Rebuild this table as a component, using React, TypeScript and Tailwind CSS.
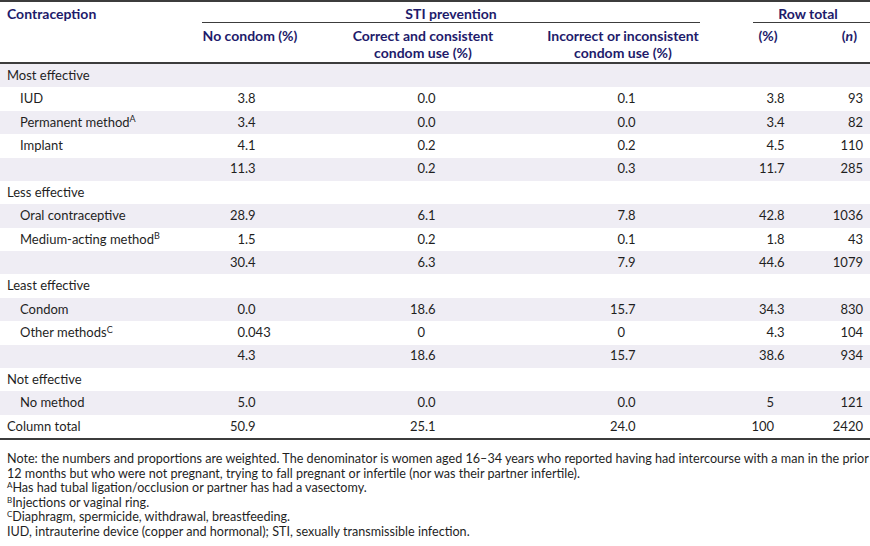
import React from "react";

type Num = string | null;

interface Row {
  label: string;
  sup?: string;
  indent?: boolean;
  values?: [Num, Num, Num, Num, Num];
}

const rows: Row[] = [
  { label: "Most effective" },
  { label: "IUD", indent: true, values: ["3.8", "0.0", "0.1", "3.8", "93"] },
  { label: "Permanent method", sup: "A", indent: true, values: ["3.4", "0.0", "0.0", "3.4", "82"] },
  { label: "Implant", indent: true, values: ["4.1", "0.2", "0.2", "4.5", "110"] },
  { label: "", values: ["11.3", "0.2", "0.3", "11.7", "285"] },
  { label: "Less effective" },
  { label: "Oral contraceptive", indent: true, values: ["28.9", "6.1", "7.8", "42.8", "1036"] },
  { label: "Medium-acting method", sup: "B", indent: true, values: ["1.5", "0.2", "0.1", "1.8", "43"] },
  { label: "", values: ["30.4", "6.3", "7.9", "44.6", "1079"] },
  { label: "Least effective" },
  { label: "Condom", indent: true, values: ["0.0", "18.6", "15.7", "34.3", "830"] },
  { label: "Other methods", sup: "C", indent: true, values: ["0.043", "0", "0", "4.3", "104"] },
  { label: "", values: ["4.3", "18.6", "15.7", "38.6", "934"] },
  { label: "Not effective" },
  { label: "No method", indent: true, values: ["5.0", "0.0", "0.0", "5", "121"] },
  { label: "Column total", values: ["50.9", "25.1", "24.0", "100", "2420"] },
];

// integer part is right-aligned in a box, so the decimal points line up
function Decimal({ value, intWidth }: { value: Num; intWidth: string }) {
  if (!value) return null;
  const [whole, frac] = value.split(".");
  return (
    <div className="flex">
      <span className={`${intWidth} text-right`}>{whole}</span>
      {frac !== undefined && <span>.{frac}</span>}
    </div>
  );
}

const grid = "grid grid-cols-[200px_100px_246px_154px_112px_58px]";

export default function App() {
  return (
    <div
      className="w-[870px] h-[546px] bg-white text-[#1f1f1f] text-[13px]"
      style={{ fontFamily: "Lato, 'Open Sans', sans-serif" }}
    >
      {/* Header */}
      <div className={`${grid} border-t-2 border-b-2 border-[#3c3c3c] font-bold text-[14px] text-[#1e1b6b]`}>
        <div className="row-span-2 pl-[7px] pt-[1px]">Contraception</div>
        <div className="col-span-3 ml-[2px] border-b border-[#3c3c3c] h-[21px] pt-[1px] text-center">
          STI prevention
        </div>
        <div className="col-span-2 ml-[53px] border-b border-[#3c3c3c] h-[21px] pt-[1px] pr-[7px] text-center">
          Row total
        </div>
        <div className="h-[39px] pt-[4px] text-center leading-[17px]">No condom (%)</div>
        <div className="pt-[4px] text-center leading-[17px]">
          Correct and consistent
          <br />
          condom use (%)
        </div>
        <div className="pt-[4px] text-center leading-[17px]">
          Incorrect or inconsistent
          <br />
          condom use (%)
        </div>
        <div className="pt-[4px] pl-[24px] text-center leading-[17px]">(%)</div>
        <div className="pt-[4px] pr-[13px] text-right leading-[17px]">
          (<span className="italic">n</span>)
        </div>
      </div>

      {/* Body */}
      <div className="border-b-2 border-[#3c3c3c]">
        {rows.map((r, i) => (
          <div
            key={i}
            className={`${grid} h-[23.375px] items-center ${i % 2 === 0 ? "bg-[#efedf4]" : "bg-white"}`}
          >
            <div className={r.indent ? "pl-[20px]" : "pl-[7px]"}>
              {r.label}
              {r.sup && <sup className="text-[9px]">{r.sup}</sup>}
            </div>
            {r.values ? (
              <>
                <Decimal value={r.values[0]} intWidth="w-[45px]" />
                <Decimal value={r.values[1]} intWidth="w-[125px]" />
                <Decimal value={r.values[2]} intWidth="w-[79px]" />
                <Decimal value={r.values[3]} intWidth="w-[74px]" />
                <div className="text-right pr-[7px]">{r.values[4]}</div>
              </>
            ) : null}
          </div>
        ))}
      </div>

      {/* Notes */}
      <div className="px-[7px] pt-[12px] text-[12.6px] leading-[14.6px] whitespace-nowrap">
        <div>
          Note: the numbers and proportions are weighted. The denominator is women aged 16–34 years who reported
          having had intercourse with a man in the prior
        </div>
        <div>
          12 months but who were not pregnant, trying to fall pregnant or infertile (nor was their partner
          infertile).
        </div>
        <div>
          <sup className="text-[8px]">A</sup>Has had tubal ligation/occlusion or partner has had a vasectomy.
        </div>
        <div>
          <sup className="text-[8px]">B</sup>Injections or vaginal ring.
        </div>
        <div>
          <sup className="text-[8px]">C</sup>Diaphragm, spermicide, withdrawal, breastfeeding.
        </div>
        <div>IUD, intrauterine device (copper and hormonal); STI, sexually transmissible infection.</div>
      </div>
    </div>
  );
}
